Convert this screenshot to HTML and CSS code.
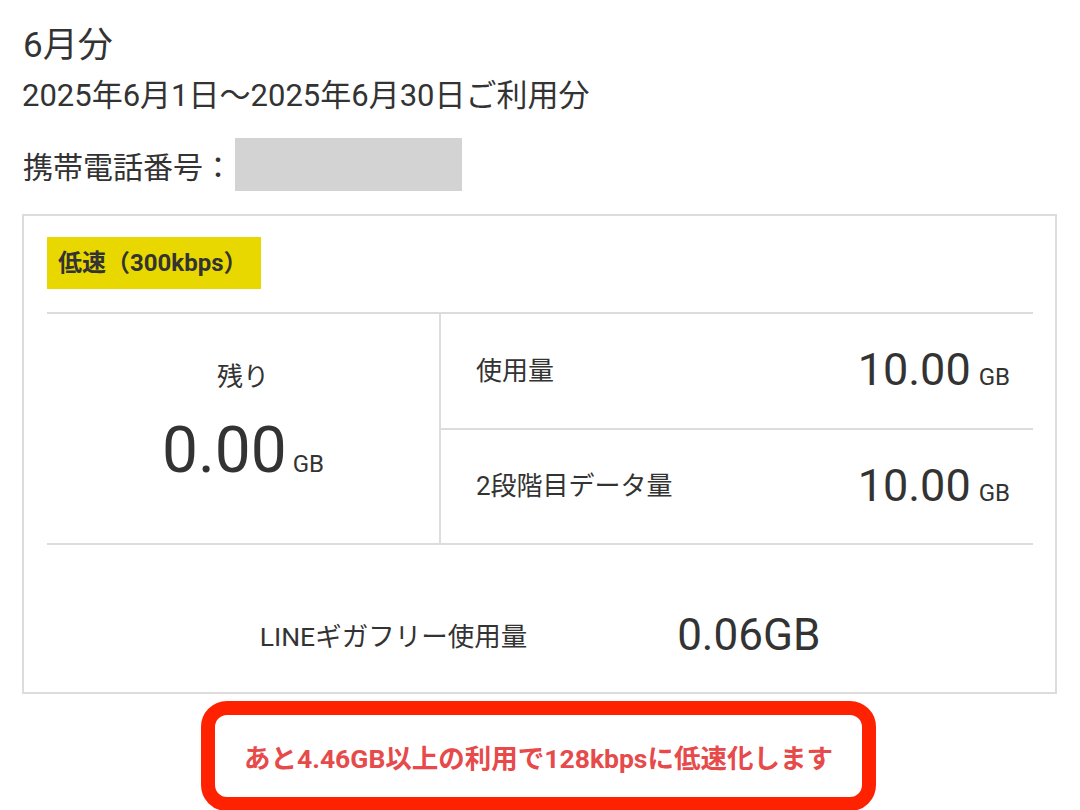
FILE: index.html
```html
<!DOCTYPE html>
<html lang="ja">
<head>
<meta charset="utf-8">
<link rel="stylesheet" href="styles.css">
</head>
<body>
<div class="page">
  <div class="month">6月分</div>
  <div class="period">2025年6月1日〜2025年6月30日ご利用分</div>
  <div class="phone"><span>携帯電話番号：</span><span class="mask"></span></div>

  <div class="card">
    <div class="badge">低速（300kbps）</div>
    <div class="grid">
      <div class="remain">
        <div class="label">残り</div>
        <div class="big"><span class="num">0.00</span><span class="unit">GB</span></div>
      </div>
      <div class="rows">
        <div class="row">
          <span class="label">使用量</span>
          <span class="val"><span class="num">10.00</span><span class="unit">GB</span></span>
        </div>
        <div class="row">
          <span class="label">2段階目データ量</span>
          <span class="val"><span class="num">10.00</span><span class="unit">GB</span></span>
        </div>
      </div>
    </div>
    <div class="line">
      <span class="label">LINEギガフリー使用量</span>
      <span class="lineval">0.06GB</span>
    </div>
  </div>

  <div class="notice">あと4.46GB以上の利用で128kbpsに低速化します</div>
</div>
</body>
</html>
```
FILE: styles.css
```css
html, body {
  margin: 0;
  padding: 0;
  background: #ffffff;
}
body {
  font-family: Roboto, "Noto Sans CJK JP", sans-serif;
  color: #333333;
  width: 1080px;
  height: 810px;
  overflow: hidden;
}
.page {
  padding-top: 24px;
}
.month {
  font-size: 35px;
  line-height: 44px;
  padding-left: 23px;
}
.period {
  font-size: 31px;
  line-height: 40px;
  padding-left: 22px;
  margin-top: 8px;
}
.phone {
  display: flex;
  align-items: center;
  padding-left: 23px;
  margin-top: 22px;
  font-size: 30px;
}
.mask {
  display: inline-block;
  width: 227px;
  height: 53px;
  background: #d3d3d3;
  margin-left: 2px;
}
.card {
  margin: 23px 23px 0 22px;
  border: 2px solid #dcdcdc;
  padding: 21px 22px 0 23px;
}
.badge {
  display: inline-block;
  background: #e9d800;
  height: 52px;
  line-height: 52px;
  padding: 0 14px 0 11px;
  font-size: 24px;
  font-weight: 700;
  color: #333;
}
.grid {
  margin-top: 23px;
  border-top: 2px solid #dcdcdc;
  border-bottom: 2px solid #dcdcdc;
  display: grid;
  grid-template-columns: 394px 1fr;
}
.label {
  font-size: 26px;
}
.remain {
  border-right: 2px solid #dcdcdc;
  display: flex;
  flex-direction: column;
  align-items: center;
  justify-content: center;
  padding-bottom: 12px;
}
.big {
  display: flex;
  align-items: baseline;
  margin-top: 20px;
  padding-left: 0;
}
.big .num {
  font-size: 64px;
  line-height: 76px;
}
.big .unit {
  margin-left: 6px;
}
.unit {
  font-size: 24px;
  margin-left: 8px;
}
.rows {
  display: flex;
  flex-direction: column;
}
.row {
  height: 114px;
  display: flex;
  align-items: center;
  justify-content: space-between;
  padding: 0 23px 0 35px;
}
.row .label {
  margin-top: -6px;
}
.row + .row {
  border-top: 2px solid #dcdcdc;
  height: 113px;
}
.val {
  display: flex;
  align-items: baseline;
  margin-top: -3px;
}
.val .num {
  font-size: 45px;
}
.line {
  height: 147px;
  display: flex;
  align-items: center;
  justify-content: center;
  gap: 150px;
  padding-top: 32px;
  box-sizing: border-box;
}
.line .label {
  font-size: 26.5px;
}
.lineval {
  font-size: 44px;
}
.notice {
  width: 647px;
  height: 82px;
  margin: 7px 0 0 201px;
  border: 14px solid #ff2200;
  border-radius: 26px;
  display: flex;
  align-items: center;
  justify-content: center;
  color: #e64a4a;
  font-size: 26.5px;
  font-weight: 700;
}
```
